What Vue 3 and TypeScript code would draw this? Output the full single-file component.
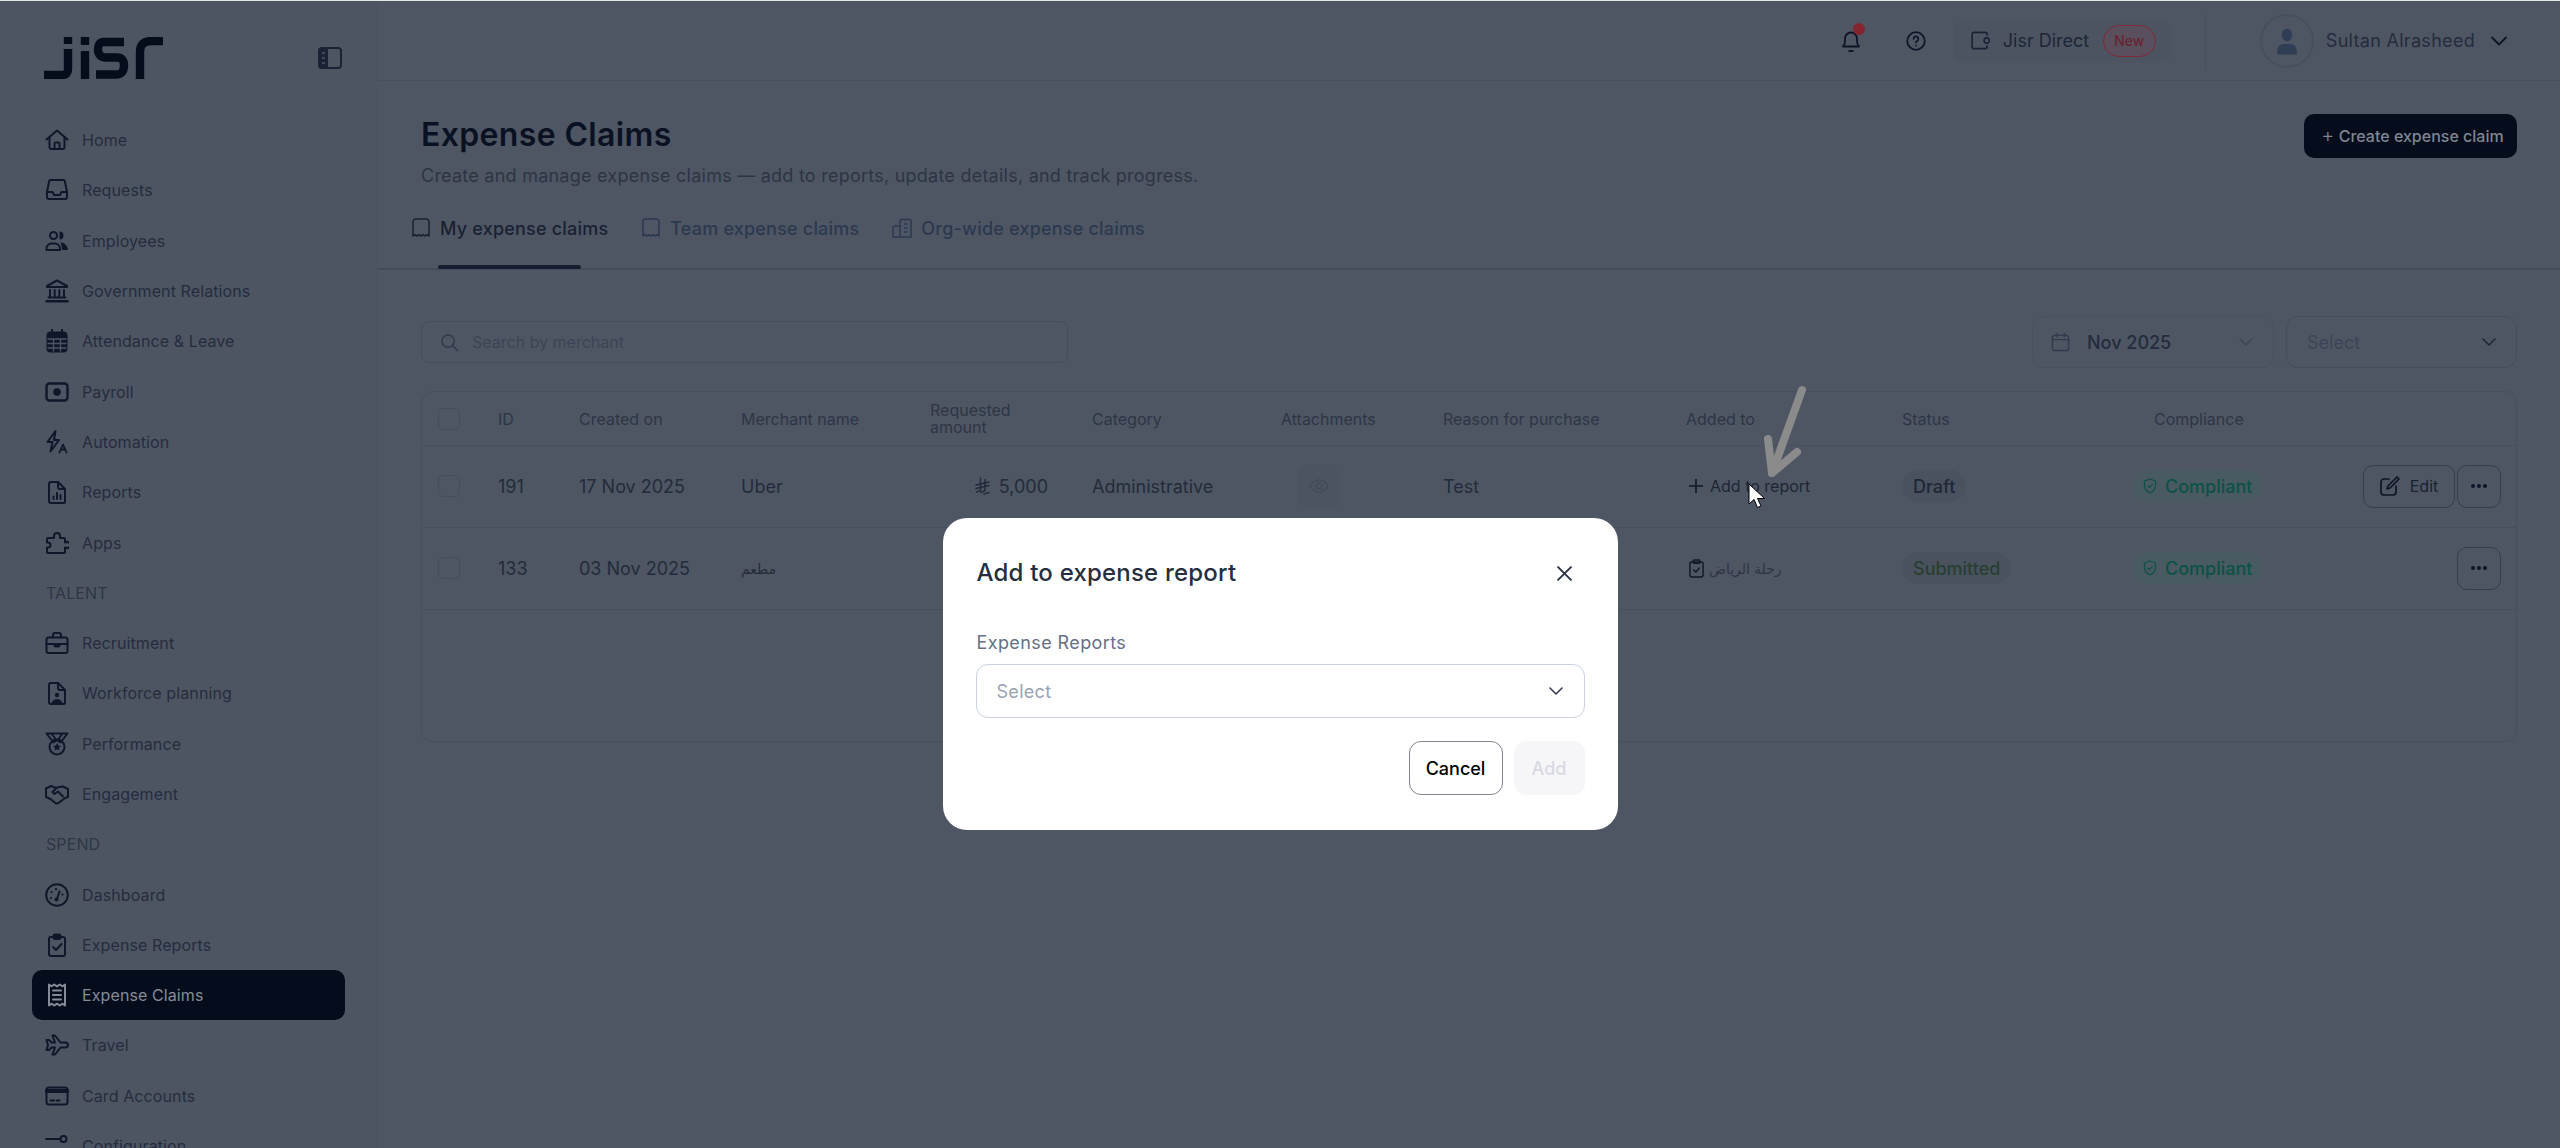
<template>
  <div class="app">
    <aside class="sidebar">
      <div class="brand">
        <svg class="logo" viewBox="0 0 119 42" fill="none" stroke="currentColor" stroke-width="8.4">
          <path d="M0 38H18Q24 38 24 32V12" />
          <path d="M24 0V7" />
          <path d="M41 14V42" />
          <path d="M41 0V8" />
          <path d="M80 5H60Q54 5 54 12Q54 20.500 62 20.500H73Q80 20.500 80 28.500Q80 37.500 72 37.500H52" />
          <path d="M96 42V15Q96 4 107 4H119" />
        </svg>
        <svg class="collapse" viewBox="0 0 24 24">
          <rect x="1" y="2" width="22" height="20" rx="3" fill="none" stroke="currentColor" stroke-width="2" />
          <path d="M1 5a3 3 0 0 1 3-3h6v20H4a3 3 0 0 1-3-3z" fill="currentColor" />
          <path d="M4 7h3M4 12h3M4 17h3" stroke="#4f5663" stroke-width="1.600" />
        </svg>
      </div>
      <nav class="nav">
        <template v-for="item in navItems" :key="item.label">
          <div v-if="item.section" class="nav-section">{{ item.label }}</div>
          <a v-else class="nav-item" :class="{ active: item.active }">
            <svg class="nav-icon" viewBox="0 0 24 24" fill="none" stroke="currentColor" stroke-width="2" stroke-linejoin="round" stroke-linecap="round" v-html="icons[item.icon!]"></svg>
            <span>{{ item.label }}</span>
          </a>
        </template>
      </nav>
    </aside>

    <div class="main">
      <header class="topbar">
        <div class="bell">
          <svg viewBox="0 0 20 24" fill="none" stroke="currentColor" stroke-width="1.800" stroke-linejoin="round">
            <path d="M2 17.500c1.500-1.500 2-3 2-5.500V9.500a6 6 0 0 1 12 0V12c0 2.500.5 4 2 5.500z" />
            <path d="M7.500 22h5" />
          </svg>
          <i class="bell-dot"></i>
        </div>
        <svg class="help" viewBox="0 0 20 20" fill="none" stroke="currentColor" stroke-width="1.700" stroke-linecap="round">
          <circle cx="10" cy="10" r="8.800" />
          <path d="M7.600 7.800a2.400 2.400 0 1 1 3.600 2.100c-.8.500-1.200 1-1.200 1.700" />
          <path d="M10 14.400v.1" />
        </svg>
        <div class="direct">
          <svg class="wallet" viewBox="0 0 20 20" fill="none" stroke="currentColor" stroke-width="1.700">
            <path d="M17 5V3.500A2 2 0 0 0 15 1.500H3A1.800 1.800 0 0 0 1.200 3.300v13.400A1.800 1.800 0 0 0 3 18.500h12a2 2 0 0 0 2-2V15" />
            <circle cx="16.500" cy="10" r="2.800" />
          </svg>
          <span class="direct-text">Jisr Direct</span>
          <span class="new-badge">New</span>
        </div>
        <div class="top-divider"></div>
        <div class="user">
          <div class="avatar">
            <svg viewBox="0 0 24 24" fill="#2f3d55">
              <ellipse cx="12" cy="8" rx="3.400" ry="4.200" />
              <path d="M5.500 21v-2.500c0-2.700 2.200-4.500 4.500-4.500h4c2.300 0 4.500 1.800 4.500 4.500V21z" />
            </svg>
          </div>
          <span class="user-name">Sultan Alrasheed</span>
          <svg class="user-chev" viewBox="0 0 16 10" fill="none" stroke="currentColor" stroke-width="1.800" stroke-linecap="round" stroke-linejoin="round">
            <path d="M1 1.500l7 7 7-7" />
          </svg>
        </div>
      </header>

      <section class="page-head">
        <div>
          <h1>Expense Claims</h1>
          <p>Create and manage expense claims — add to reports, update details, and track progress.</p>
        </div>
        <button class="create-btn"><span class="plus">+</span> Create expense claim</button>
      </section>

      <div class="tabs">
        <div v-for="tab in tabs" :key="tab.label" class="tab" :class="{ active: tab.active }">
          <svg viewBox="0 0 20 20" fill="none" stroke="currentColor" stroke-width="1.500" stroke-linejoin="round" v-html="tab.org ? orgIcon : tabIcon"></svg>
          <span>{{ tab.label }}</span>
        </div>
        <i class="tab-indicator"></i>
      </div>

      <div class="toolbar">
        <div class="search">
          <svg viewBox="0 0 20 20" fill="none" stroke="currentColor" stroke-width="1.600" stroke-linecap="round">
            <circle cx="8.500" cy="8.500" r="6.500" />
            <path d="M13.500 13.500l5 5" />
          </svg>
          <span>Search by merchant</span>
        </div>
        <div class="filter date">
          <svg viewBox="0 0 20 20" fill="none" stroke="currentColor" stroke-width="1.500" stroke-linecap="round">
            <rect x="1.500" y="3" width="17" height="16" rx="2.500" />
            <path d="M1.500 7.500h17M6 1v3.500M14 1v3.500" />
          </svg>
          <span>Nov 2025</span>
          <svg class="chev faded" viewBox="0 0 14 8" fill="none" stroke="currentColor" stroke-width="1.500" stroke-linecap="round" stroke-linejoin="round"><path d="M1 1l6 6 6-6" /></svg>
        </div>
        <div class="filter plain">
          <span>Select</span>
          <svg class="chev" viewBox="0 0 14 8" fill="none" stroke="currentColor" stroke-width="1.500" stroke-linecap="round" stroke-linejoin="round"><path d="M1 1l6 6 6-6" /></svg>
        </div>
      </div>

      <div class="table">
        <div class="row head">
          <div class="cell"><i class="check"></i></div>
          <div class="cell">ID</div>
          <div class="cell">Created on</div>
          <div class="cell">Merchant name</div>
          <div class="cell two-line">Requested<br />amount</div>
          <div class="cell">Category</div>
          <div class="cell">Attachments</div>
          <div class="cell">Reason for purchase</div>
          <div class="cell">Added to</div>
          <div class="cell">Status</div>
          <div class="cell compliance-head">Compliance</div>
          <div class="cell"></div>
        </div>

        <div v-for="row in rows" :key="row.id" class="row body">
          <div class="cell"><i class="check"></i></div>
          <div class="cell">{{ row.id }}</div>
          <div class="cell">{{ row.created }}</div>
          <div class="cell" :class="{ arabic: row.report }">{{ row.merchant }}</div>
          <div class="cell amount">
            <template v-if="row.amount">
              <svg class="riyal" viewBox="0 0 16 18" fill="none" stroke="currentColor" stroke-width="1.500" stroke-linecap="round">
                <path d="M5.500 1v12.500L1.500 15M10 2.500v11l-4 2" />
                <path d="M1 8l13-3M1 11.500l13-3M9 17l5-1.500" />
              </svg>
              <span>{{ row.amount }}</span>
            </template>
          </div>
          <div class="cell">{{ row.category }}</div>
          <div class="cell">
            <div v-if="row.category" class="eye-pill">
              <svg viewBox="0 0 20 20" fill="none" stroke="currentColor" stroke-width="1.500">
                <path d="M1 10c2.500-4.500 5.500-6 9-6s6.500 1.500 9 6c-2.500 4.500-5.500 6-9 6s-6.500-1.500-9-6z" />
                <circle cx="10" cy="10" r="2.800" />
              </svg>
            </div>
          </div>
          <div class="cell">{{ row.reason }}</div>
          <div class="cell added">
            <template v-if="row.report">
              <svg class="clip" viewBox="0 0 16 20" fill="none" stroke="currentColor" stroke-width="1.500" stroke-linejoin="round" stroke-linecap="round">
                <rect x="1" y="3" width="14" height="16" rx="2" />
                <rect x="4.500" y="1" width="7" height="3.500" rx="1" />
                <path d="M5 11.500l2.300 2.300L11 9.500" />
              </svg>
              <span class="report-name">{{ row.report }}</span>
            </template>
            <template v-else>
              <svg class="add-plus" viewBox="0 0 14 14" fill="none" stroke="currentColor" stroke-width="1.600"><path d="M7 0v14M0 7h14" /></svg>
              <span class="add-link">Add to report</span>
            </template>
          </div>
          <div class="cell">
            <span class="pill" :class="row.status.toLowerCase()">{{ row.status }}</span>
          </div>
          <div class="cell">
            <span class="pill compliant">
              <svg viewBox="0 0 14 16" fill="none" stroke="currentColor" stroke-width="1.200" stroke-linejoin="round" stroke-linecap="round">
                <path d="M7 1l5.500 2v5c0 3-2.500 5.500-5.500 7-3-1.500-5.500-4-5.500-7V3z" />
                <path d="M4.800 8l1.600 1.600 2.800-3" />
              </svg>
              Compliant
            </span>
          </div>
          <div class="cell actions">
            <button v-if="row.editable" class="act edit">
              <svg viewBox="0 0 20 20" fill="none" stroke="currentColor" stroke-width="1.700" stroke-linecap="round" stroke-linejoin="round">
                <path d="M9 3H4a3 3 0 0 0-3 3v10a3 3 0 0 0 3 3h9a3 3 0 0 0 3-3v-6" />
                <path d="M17 1l2 2-9 9-3 1 1-3z" />
              </svg>
              Edit
            </button>
            <button class="act more"><i></i><i></i><i></i></button>
          </div>
        </div>
      </div>
    </div>

    <div class="modal-layer">
      <div class="modal">
        <div class="modal-head">
          <h2>Add to expense report</h2>
          <svg viewBox="0 0 14 14" fill="none" stroke="currentColor" stroke-width="1.800" stroke-linecap="round"><path d="M1 1l12 12M13 1L1 13" /></svg>
        </div>
        <label>Expense Reports</label>
        <div class="modal-select">
          <span>Select</span>
          <svg viewBox="0 0 14 8" fill="none" stroke="currentColor" stroke-width="1.600" stroke-linecap="round" stroke-linejoin="round"><path d="M1 1l6 6 6-6" /></svg>
        </div>
        <div class="modal-actions">
          <button class="cancel">Cancel</button>
          <button class="add">Add</button>
        </div>
      </div>
    </div>

    <svg class="pointer-arrow" viewBox="0 0 50 100" fill="none" stroke="#8b8b8b" stroke-width="8" stroke-linecap="round" stroke-linejoin="round">
      <path d="M41 5L11 88" />
      <path d="M7 54L11 88L36 67" />
    </svg>
    <svg class="cursor" viewBox="0 0 18 26">
      <path d="M1 1v20l5-4.500 3.500 8 3.500-1.500-3.500-7.500h7z" fill="#fff" stroke="#000" stroke-width="1" />
    </svg>
  </div>
</template>

<script setup lang="ts">
interface NavItem {
  label: string
  icon?: string
  section?: boolean
  active?: boolean
}

interface ClaimRow {
  id: number
  created: string
  merchant: string
  amount?: string
  category?: string
  reason?: string
  report?: string
  status: string
  editable?: boolean
}

const navItems: NavItem[] = [
  { label: 'Home', icon: 'home' },
  { label: 'Requests', icon: 'inbox' },
  { label: 'Employees', icon: 'users' },
  { label: 'Government Relations', icon: 'bank' },
  { label: 'Attendance & Leave', icon: 'calendar' },
  { label: 'Payroll', icon: 'money' },
  { label: 'Automation', icon: 'bolt' },
  { label: 'Reports', icon: 'report' },
  { label: 'Apps', icon: 'puzzle' },
  { label: 'TALENT', section: true },
  { label: 'Recruitment', icon: 'briefcase' },
  { label: 'Workforce planning', icon: 'docUser' },
  { label: 'Performance', icon: 'medal' },
  { label: 'Engagement', icon: 'handshake' },
  { label: 'SPEND', section: true },
  { label: 'Dashboard', icon: 'gauge' },
  { label: 'Expense Reports', icon: 'clipboard' },
  { label: 'Expense Claims', icon: 'receipt', active: true },
  { label: 'Travel', icon: 'plane' },
  { label: 'Card Accounts', icon: 'card' },
  { label: 'Configuration', icon: 'sliders' },
]

const icons: Record<string, string> = {
  home: '<path d="M1.500 11.500L12 2.500l10.500 9"/><path d="M4.500 9.500V19a2 2 0 0 0 2 2h11a2 2 0 0 0 2-2V9.500"/><path d="M9.500 21v-5.500a1 1 0 0 1 1-1h3a1 1 0 0 1 1 1V21"/>',
  inbox: '<path d="M6 2h12a2 2 0 0 1 2 2l2 10v5a2 2 0 0 1-2 2H4a2 2 0 0 1-2-2v-5L4 4a2 2 0 0 1 2-2z"/><path d="M2 14h5.500l1.500 3h6l1.500-3H22"/>',
  users: '<circle cx="8.500" cy="6.500" r="3.500"/><path d="M14.500 2.500a4 4 0 0 1 0 8z" fill="currentColor" stroke="none"/><path d="M1.500 21v-1.500c0-3 2.500-5 5-5h3.500c2.500 0 5 2 5 5V21z"/><path d="M15.500 13.500c3.500 0 7 2.500 7.500 7.500h-6c0-3-.5-5-1.500-7.500z" fill="currentColor" stroke="none"/>',
  bank: '<path d="M12 1.500L22 7v1H2V7z"/><path d="M5 11v7M9.700 11v7M14.300 11v7M19 11v7M3.500 18.500h17"/><path d="M1.500 22.200h21" stroke-width="2.400"/>',
  calendar: '<rect x="2.500" y="3.500" width="19" height="19" rx="3" fill="currentColor"/><path d="M7 .8v4M17 .8v4"/><path d="M3 10h18M3 14.500h18M3 19h18M8.500 10v12M15.500 10v12" stroke="#4f5663" stroke-width="1.300"/>',
  money: '<rect x="1.500" y="3.500" width="21" height="17" rx="3" stroke-width="2.400"/><circle cx="12" cy="12" r="3.800" fill="currentColor" stroke="none"/>',
  bolt: '<path d="M10.500 1L2.500 12h5l-2 9.500 8.500-11.500H9z"/><path d="M14.500 22.500l3.500-8 3.500 8M15.800 19.500h4.400" stroke-width="1.800"/>',
  report: '<path d="M4 4a2 2 0 0 1 2-2h7l7 7v13a1 1 0 0 1-1 1H6a2 2 0 0 1-2-2z"/><path d="M13 2v5a2 2 0 0 0 2 2h5"/><path d="M8.500 19v-2.500M12 19v-6M15.500 19v-4"/>',
  puzzle: '<path d="M9 5a3 3 0 1 1 6 0v2h4a1.500 1.500 0 0 1 1 1v3.500h.5a3 3 0 1 1 0 5H20V21a1 1 0 0 1-1 1H3a1 1 0 0 1-1-1v-4.500h1a2.500 2.500 0 0 0 0-5H2V8a1 1 0 0 1 1-1h6z"/>',
  briefcase: '<rect x="1.500" y="6.500" width="21" height="15.500" rx="2"/><path d="M8 6.500V4a2 2 0 0 1 2-2h4a2 2 0 0 1 2 2v2.500"/><path d="M1.500 13h21"/><path d="M9.500 13h5v1.500a1 1 0 0 1-1 1h-3a1 1 0 0 1-1-1z" fill="currentColor"/>',
  docUser: '<path d="M4 4a2 2 0 0 1 2-2h7l7 7v13a1 1 0 0 1-1 1H6a2 2 0 0 1-2-2z"/><path d="M13 2v5a2 2 0 0 0 2 2h5"/><circle cx="12" cy="14" r="2.200" fill="currentColor" stroke="none"/><path d="M6.500 22.500c.5-3 3-4.500 5.500-4.500s5 1.500 5.500 4.500z" fill="currentColor" stroke="none"/>',
  medal: '<path d="M1.500 1.500h5l5 7-3 2zM22.500 1.500h-5l-5 7 3 2zM7 1.500h10"/><circle cx="12" cy="15" r="7.500"/><path d="M12 11l1.200 2.600 2.800.3-2.100 1.900.6 2.800-2.500-1.400-2.500 1.400.6-2.800L8 13.900l2.800-.3z" fill="currentColor" stroke="none"/>',
  handshake: '<path d="M1 6.500l5-2.500 5 2 3-1 4-.5 5 2.500v8l-3 1-6.500 5-2.500.5-5.500-4.500L1 15z"/><path d="M11 6.500L7.500 10l2 2 3.500-2.500 5 5"/>',
  gauge: '<circle cx="12" cy="12" r="10.800"/><circle cx="11.500" cy="16.500" r="2" fill="currentColor" stroke="none"/><path d="M12 16l2.500-7.500"/><path d="M6 15v.1M6.500 9v.1M11 6.200v.1M17.500 11.500v.1" stroke-width="2.200"/>',
  clipboard: '<rect x="4" y="4" width="16" height="19" rx="2"/><rect x="8.500" y="1.500" width="7" height="4.500" rx="1.500" fill="currentColor"/><path d="M8 14l3 3 5.500-6"/>',
  receipt: '<path d="M4 1.500l2.700 1.800 2.600-1.800 2.700 1.800 2.700-1.800 2.600 1.800 2.700-1.800v21l-2.700-1.800-2.600 1.800-2.700-1.800-2.700 1.800-2.600-1.800L4 22.500z"/><path d="M8 7.500h8M8 12h8M8 16.500h8"/>',
  plane: '<path d="M23 12c0-1.500-1.500-2.500-3-2.500h-4.500L10 2.500H7.500L10 9.500H6.500L4 7H1.500L3 12l-1.500 5H4l2.500-2.500H10L7.500 21.500H10l5.500-7H20c1.500 0 3-1 3-2.500z"/>',
  card: '<rect x="1.500" y="3.500" width="21" height="17" rx="2.500"/><path d="M1.500 7h21" stroke-width="4"/><path d="M5.500 16.500h3.500M11.500 16.500h3"/>',
  sliders: '<path d="M1 5h14"/><circle cx="18.500" cy="5" r="3"/>',
}

const tabs = [
  { label: 'My expense claims', active: true },
  { label: 'Team expense claims' },
  { label: 'Org-wide expense claims', org: true },
]

const tabIcon = '<path d="M2 3.500A2.500 2.500 0 0 1 4.500 1h11A2.500 2.500 0 0 1 18 3.500V18l-2-1.300-2 1.300-2-1.300-2 1.300-2-1.300L6 18l-2-1.300L2 18z"/>'
const orgIcon = '<path d="M8 19V3a1.500 1.500 0 0 1 1.500-1.500h8A1.500 1.500 0 0 1 19 3v16H1v-9.500A1.500 1.500 0 0 1 2.500 8H8"/><path d="M12 6h3.500M12 10h3.500M12 14h3.500"/>'

const rows: ClaimRow[] = [
  {
    id: 191,
    created: '17 Nov 2025',
    merchant: 'Uber',
    amount: '5,000',
    category: 'Administrative',
    reason: 'Test',
    status: 'Draft',
    editable: true,
  },
  {
    id: 133,
    created: '03 Nov 2025',
    merchant: 'مطعم',
    report: 'رحلة الرياض',
    status: 'Submitted',
  },
]
</script>

<style>
html,
body {
  margin: 0;
  background: #4f5663;
}
</style>

<style scoped>
.app {
  position: relative;
  display: flex;
  width: 2560px;
  height: 1148px;
  overflow: hidden;
  box-sizing: border-box;
  border-top: 1px solid #e4e6e8;
  background: #4f5663;
  font-family: Inter, "DejaVu Sans", sans-serif;
  color: #232b3c;
}

.sidebar {
  flex: 0 0 378px;
  box-sizing: border-box;
  padding: 36px 32px 0;
  background: #4e5562;
  border-right: 1px solid #4c5360;
}

.brand {
  display: flex;
  align-items: center;
  justify-content: space-between;
  height: 42px;
  padding: 0 3px 0 12px;
  color: #050c1c;
}

.logo {
  width: 119px;
  height: 42px;
}

.collapse {
  width: 24px;
  height: 24px;
  color: #1a2236;
}

.nav {
  margin-top: 36px;
}

.nav-item,
.nav-section {
  display: flex;
  align-items: center;
  height: 50.300px;
  padding-left: 13px;
  font-size: 16px;
  letter-spacing: 0.1px;
  color: #252c3f;
}

.nav-section {
  padding-left: 14px;
  color: #2e3547;
}

.nav-item {
  gap: 13px;
  border-radius: 10px;
}

.nav-item.active {
  background: #050c1c;
  color: #858b98;
}

.nav-icon {
  flex: none;
  width: 24px;
  height: 24px;
  color: #0f172b;
}

.active .nav-icon {
  color: #858b98;
}

.main {
  flex: 1;
  min-width: 0;
}

.topbar {
  display: flex;
  align-items: center;
  height: 80px;
  box-sizing: border-box;
  padding-right: 53px;
  justify-content: flex-end;
  border-bottom: 1px solid #484f5c;
}

.bell {
  position: relative;
  width: 20px;
  height: 24px;
  color: #0d1428;
}

.bell svg {
  display: block;
  width: 20px;
  height: 24px;
}

.bell-dot {
  position: absolute;
  top: -6px;
  right: -4px;
  width: 12px;
  height: 12px;
  border-radius: 50%;
  background: #85242f;
}

.help {
  width: 20px;
  height: 20px;
  margin-left: 45px;
  color: #0d1428;
}

.direct {
  display: flex;
  align-items: center;
  width: 217px;
  height: 43px;
  box-sizing: border-box;
  margin-left: 28px;
  padding-left: 17px;
  border-radius: 10px;
  background: #4c5462;
}

.wallet {
  width: 19px;
  height: 19px;
  color: #1a2236;
}

.direct-text {
  margin-left: 13px;
  font-size: 18px;
  color: #1d2537;
}

.new-badge {
  display: flex;
  align-items: center;
  justify-content: center;
  width: 53px;
  height: 32px;
  box-sizing: border-box;
  margin-left: auto;
  margin-right: 15px;
  border: 1px solid #7e2a38;
  border-radius: 16px;
  background: #5a4f5c;
  font-size: 14px;
  color: #6b1c2b;
}

.top-divider {
  width: 1px;
  height: 58px;
  margin-left: 34px;
  background: #484f5c;
}

.user {
  display: flex;
  align-items: center;
  margin-left: 54px;
}

.avatar {
  display: flex;
  align-items: center;
  justify-content: center;
  width: 54px;
  height: 54px;
  box-sizing: border-box;
  border: 2px solid #484f5c;
  border-radius: 50%;
}

.avatar svg {
  width: 36px;
  height: 36px;
}

.user-name {
  margin-left: 12px;
  font-size: 18px;
  letter-spacing: 0.3px;
  color: #252c3f;
}

.user-chev {
  width: 16px;
  height: 10px;
  margin-left: 16px;
  color: #0d1428;
}

.page-head {
  display: flex;
  justify-content: space-between;
  align-items: flex-start;
  padding: 34px 43px 0;
}

h1 {
  margin: 0;
  font-size: 32px;
  line-height: 40px;
  font-weight: 600;
  letter-spacing: 0.35px;
  color: #0a1123;
}

.page-head p {
  margin: 7px 0 0;
  font-size: 18px;
  line-height: 28px;
  letter-spacing: 0.24px;
  color: #2d3446;
}

.create-btn {
  width: 213px;
  height: 44px;
  margin-top: -1px;
  padding: 0 0 0 4px;
  border: 0;
  border-radius: 10px;
  background: #050c1c;
  font: 500 16px Inter, sans-serif;
  color: #7f8693;
  white-space: nowrap;
}

.plus {
  font-size: 20px;
  line-height: 16px;
  font-weight: 300;
}

.tabs {
  position: relative;
  display: flex;
  gap: 33px;
  height: 80px;
  box-sizing: border-box;
  padding: 19px 0 0 33px;
  border-bottom: 2px solid #454c59;
}

.tab {
  display: flex;
  align-items: center;
  gap: 9px;
  height: 38px;
  font-size: 18px;
  font-weight: 500;
  letter-spacing: 0.2px;
  color: #2b3950;
}

.tab.active {
  color: #1a2133;
}

.tab svg {
  width: 20px;
  height: 20px;
}

.tab-indicator {
  position: absolute;
  left: 60px;
  bottom: -1px;
  width: 143px;
  height: 4px;
  border-radius: 2px;
  background: #161e32;
}

.toolbar {
  display: flex;
  align-items: center;
  gap: 12px;
  margin: 46px 43px 0;
}

.search {
  display: flex;
  align-items: center;
  gap: 13px;
  width: 647px;
  height: 42px;
  box-sizing: border-box;
  padding-left: 18px;
  margin-right: auto;
  border: 1px solid #414d60;
  border-radius: 8px;
  font-size: 16px;
  color: #3a4558;
}

.search svg {
  width: 19px;
  height: 19px;
  color: #2e3a4e;
}

.filter {
  display: flex;
  align-items: center;
  height: 52px;
  box-sizing: border-box;
  border: 1px solid #465061;
  border-radius: 12px;
  font-size: 18px;
}

.date {
  width: 242px;
  padding: 0 20px 0 18px;
  border-color: #495160;
  font-weight: 500;
  color: #232b3f;
}

.date > svg:first-child {
  width: 19px;
  height: 20px;
  margin-right: 17px;
  color: #2e3a4e;
}

.plain {
  width: 231px;
  padding: 0 20px;
  border-color: #414d60;
  color: #3a4558;
}

.chev {
  width: 14px;
  height: 8px;
  margin-left: auto;
  color: #1d2537;
}

.chev.faded {
  color: #3a4558;
}

.table {
  height: 351px;
  box-sizing: border-box;
  margin: 23px 43px 0;
  border: 1px solid #484f5c;
  border-radius: 12px;
}

.row {
  display: grid;
  grid-template-columns: 76px 81px 162px 189px 162px 189px 162px 243px 216px 230px 231px 1fr;
  align-items: center;
  box-sizing: border-box;
  border-bottom: 1px solid #484f5c;
}

.row.head {
  height: 54px;
  font-size: 16px;
  color: #2d3547;
}

.row.body {
  height: 82px;
  padding-bottom: 1px;
  font-size: 18px;
  color: #232b3c;
}

.two-line {
  line-height: 17px;
}

.arabic {
  font-size: 14px;
}

.compliance-head {
  padding-left: 22px;
}

.check {
  display: block;
  width: 22px;
  height: 22px;
  margin-left: 16px;
  box-sizing: border-box;
  border: 1px solid #414d60;
  border-radius: 5px;
}

.amount {
  display: flex;
  align-items: center;
  justify-content: flex-end;
  gap: 8px;
  padding-right: 44px;
}

.riyal {
  width: 16px;
  height: 18px;
}

.eye-pill {
  display: flex;
  align-items: center;
  justify-content: center;
  width: 42px;
  height: 43px;
  margin-left: 17px;
  border-radius: 10px;
  background: #4c5361;
  color: #444b58;
}

.eye-pill svg {
  width: 20px;
  height: 20px;
}

.added {
  display: flex;
  align-items: center;
  padding-left: 3px;
}

.add-plus {
  width: 14px;
  height: 14px;
  color: #101728;
}

.add-link {
  margin-left: 7px;
  font-size: 16px;
  color: #1d2537;
}

.clip {
  width: 15px;
  height: 19px;
  color: #101728;
}

.report-name {
  margin-left: 5px;
  font-size: 14px;
  color: #2d3547;
}

.pill {
  display: inline-flex;
  align-items: center;
  height: 32px;
  padding: 0 11px;
  border-radius: 16px;
  font-size: 18px;
  font-weight: 500;
}

.draft {
  background: #4a515f;
  color: #1f2738;
}

.submitted {
  background: #4a525f;
  color: #283f31;
}

.compliant {
  gap: 8px;
  background: #495a62;
  color: #0b5246;
}

.compliant svg {
  width: 14px;
  height: 16px;
}

.actions {
  display: flex;
  justify-content: flex-end;
  gap: 2px;
  padding-right: 15px;
}

.act {
  display: flex;
  align-items: center;
  justify-content: center;
  height: 43px;
  box-sizing: border-box;
  border: 1px solid #353d4e;
  border-radius: 10px;
  background: none;
  padding: 0;
}

.edit {
  gap: 10px;
  width: 92px;
  font: 16px Inter, sans-serif;
  color: #1a2133;
}

.edit svg {
  width: 20px;
  height: 20px;
  color: #0d1428;
}

.more {
  gap: 2px;
  width: 44px;
}

.more i {
  width: 4px;
  height: 4px;
  border-radius: 50%;
  background: #0d1428;
}

.modal-layer {
  position: absolute;
  inset: 0;
  display: flex;
  justify-content: center;
  padding-top: 517px;
}

.modal {
  width: 675px;
  height: 312px;
  box-sizing: border-box;
  padding: 40px 33px 0 34px;
  border-radius: 24px;
  background: #fff;
}

.modal-head {
  display: flex;
  align-items: center;
  justify-content: space-between;
  height: 30px;
  padding-right: 13px;
  color: #2b3445;
}

.modal-head svg {
  width: 15px;
  height: 15px;
}

h2 {
  margin: 0;
  font-size: 24px;
  font-weight: 500;
  line-height: 30px;
  letter-spacing: 0.2px;
  color: #252e3f;
}

label {
  display: block;
  margin-top: 43px;
  font-size: 18px;
  line-height: 24px;
  letter-spacing: 0.4px;
  color: #667085;
}

.modal-select {
  display: flex;
  align-items: center;
  justify-content: space-between;
  height: 54px;
  box-sizing: border-box;
  margin: 9px 0 0 -1px;
  padding: 0 21px 0 20px;
  border: 1px solid #c9d2de;
  border-radius: 12px;
  font-size: 18px;
  letter-spacing: 0.3px;
  color: #98a2b3;
}

.modal-select svg {
  width: 14px;
  height: 8px;
  color: #344054;
}

.modal-actions {
  display: flex;
  justify-content: flex-end;
  gap: 11px;
  margin-top: 23px;
}

.modal-actions button {
  height: 54px;
  box-sizing: border-box;
  border-radius: 12px;
  font: 500 18px Inter, sans-serif;
}

.cancel {
  width: 94px;
  border: 1px solid #7f8590;
  background: #fff;
  color: #000;
}

.add {
  width: 71px;
  border: 0;
  background: #f6f6f9;
  color: #d8d9e3;
}

.pointer-arrow {
  position: absolute;
  left: 1761px;
  top: 384px;
  width: 50px;
  height: 100px;
}

.cursor {
  position: absolute;
  left: 1748px;
  top: 482px;
  width: 18px;
  height: 26px;
}
</style>
